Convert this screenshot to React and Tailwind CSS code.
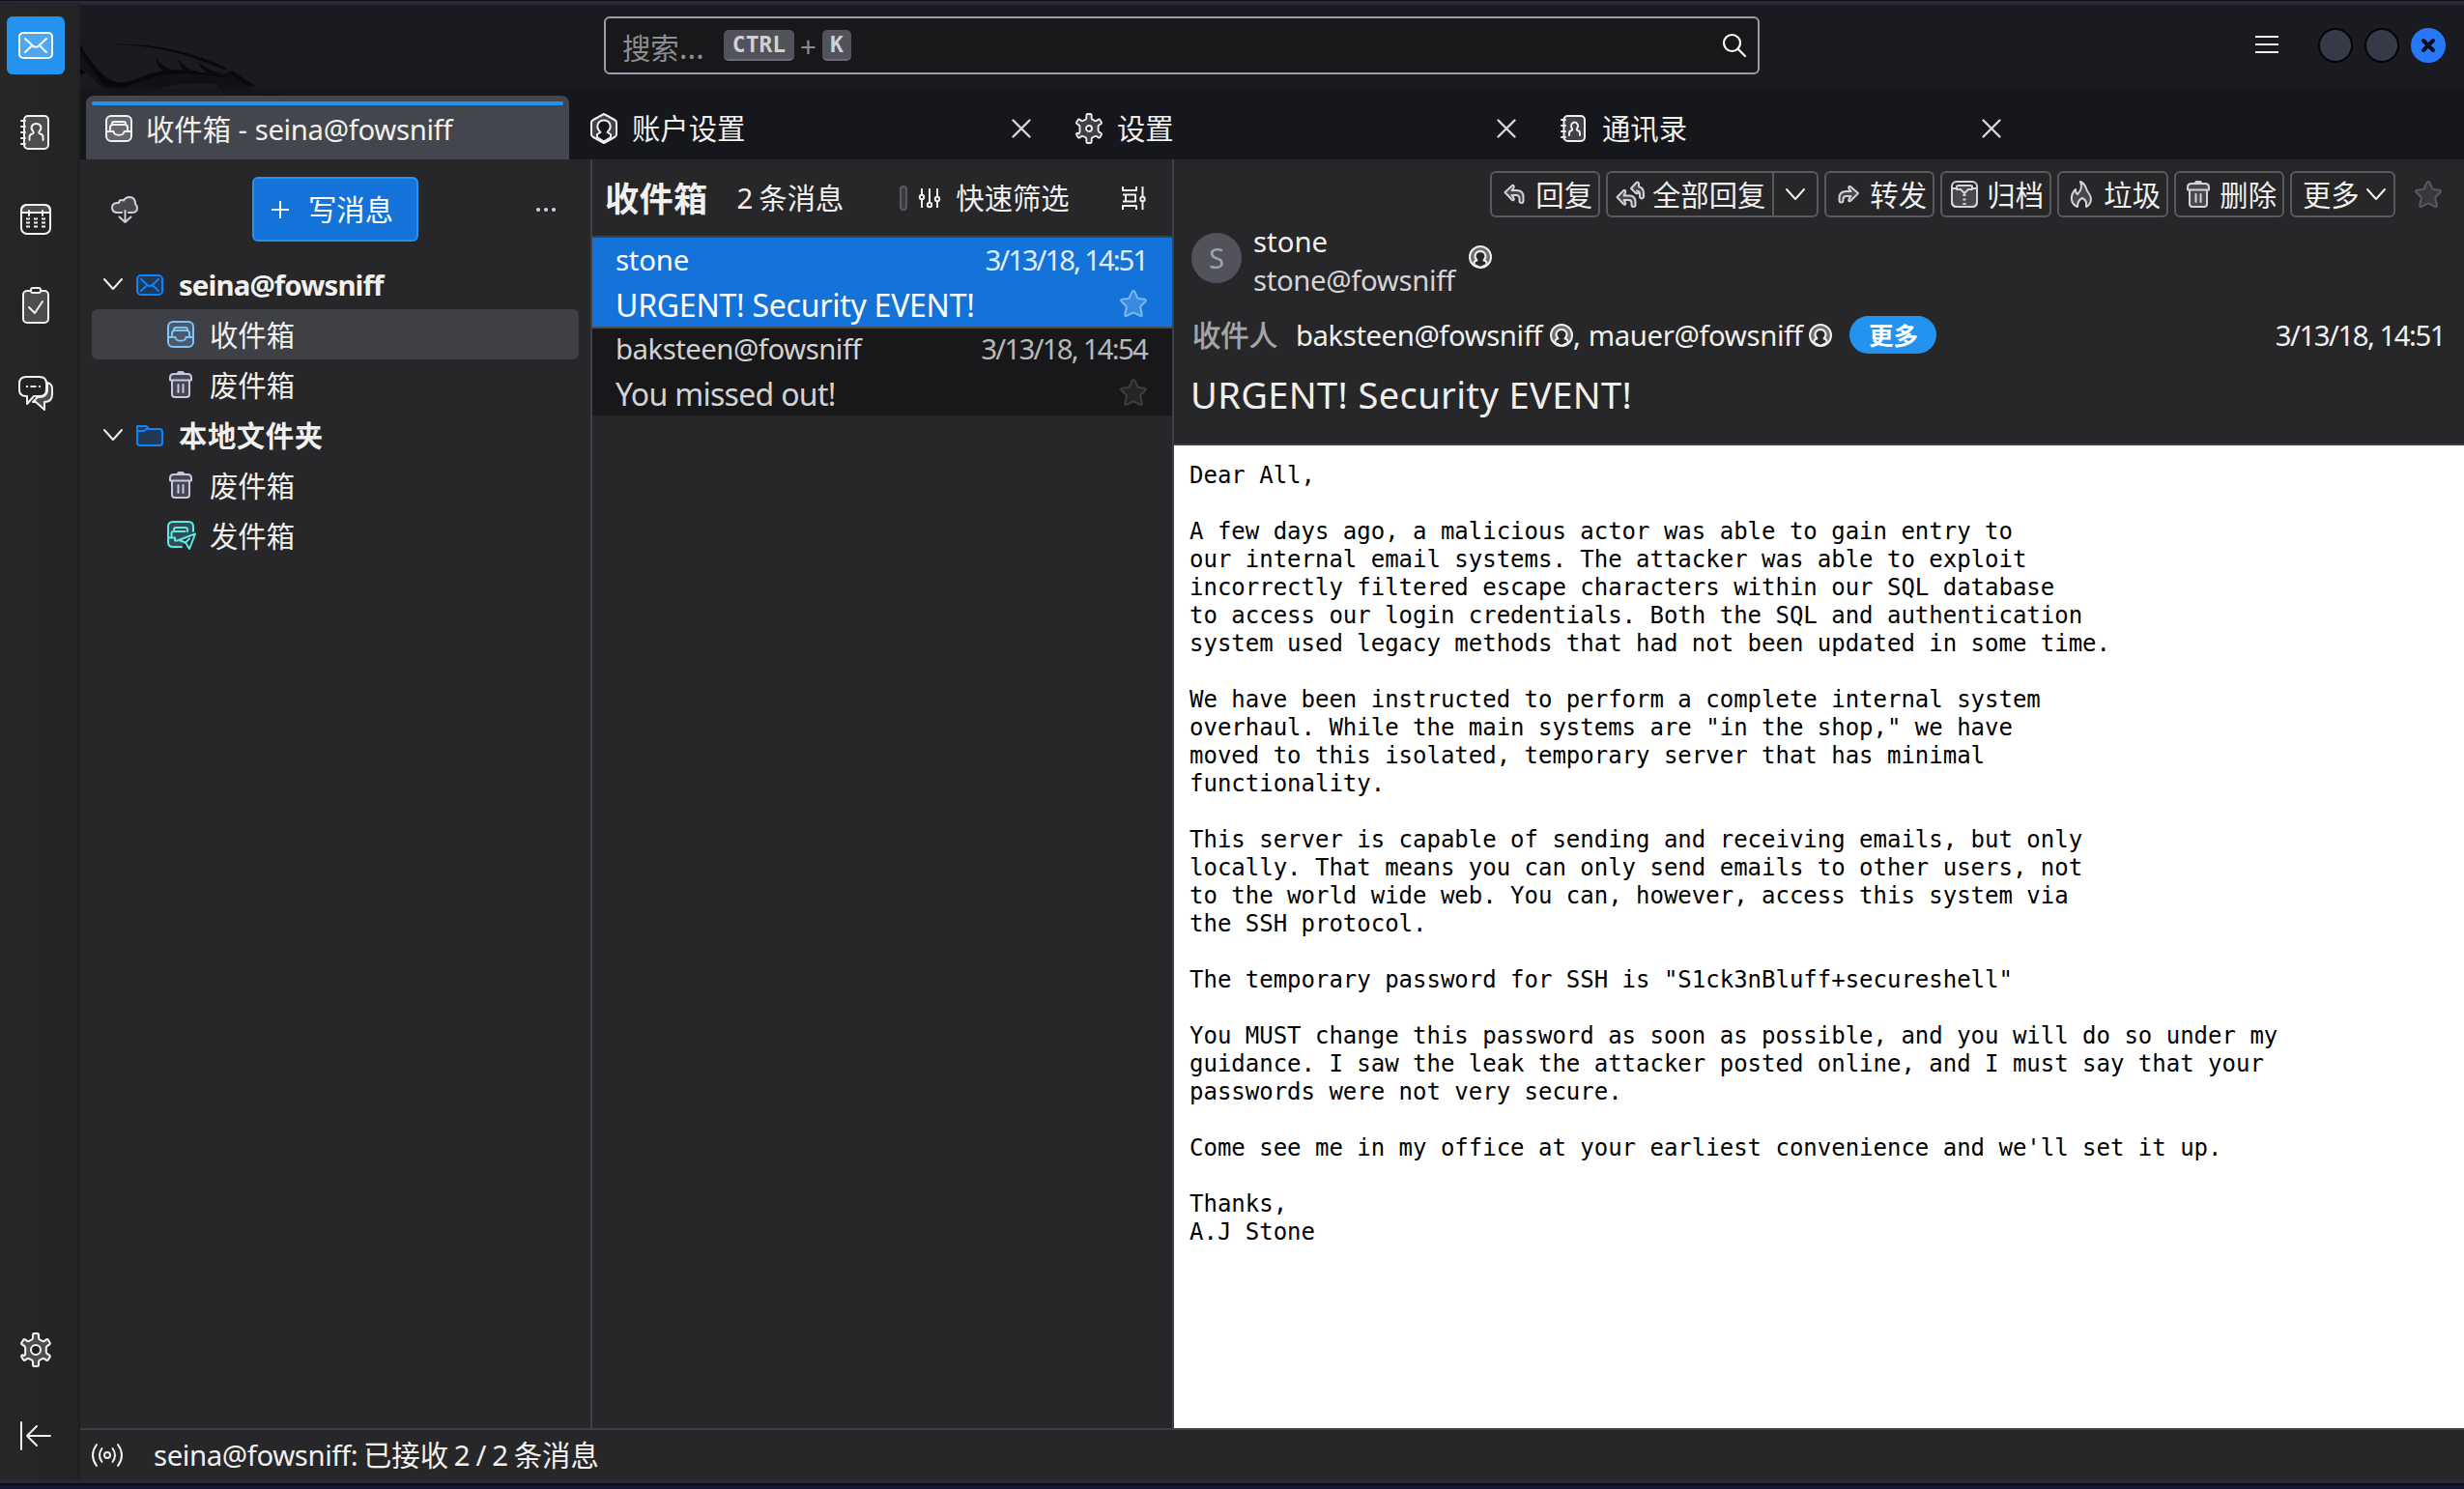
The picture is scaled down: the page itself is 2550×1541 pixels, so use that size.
import React from "react";

function Icon({ w = 28, h = 28, className = "", sw = 2, children }) {
  return (
    <svg
      width={w}
      height={h}
      viewBox={`0 0 ${w} ${h}`}
      fill="none"
      stroke="currentColor"
      strokeWidth={sw}
      strokeLinecap="round"
      strokeLinejoin="round"
      className={`block shrink-0 overflow-visible ${className}`}
    >
      {children}
    </svg>
  );
}

const soft = { fill: "currentColor", fillOpacity: 0.2 };

const MailIcon = ({ w = 36, h = 28, className }) => (
  <Icon w={w} h={h} className={className}>
    <rect x="1" y="1" width={w - 2} height={h - 2} rx="4" {...soft} />
    <path
      d={
        w > 30
          ? "M7 7l8 7.5q3 2.6 6 0L29 7M7 21l6.5-6.2M29 21l-6.5-6.2"
          : "M5 5l6.5 6q2.5 2.2 5 0L23 5M5 17l6-5.4M23 17l-6-5.4"
      }
    />
  </Icon>
);

const AddressIcon = ({ w = 30, h = 36, className }) => (
  <Icon w={w} h={h} className={className}>
    {h > 30 ? (
      <>
        <rect x="4" y="1" width="25" height="34" rx="4" {...soft} />
        <path d="M1 6h4M1 12h4M1 18h4M1 24h4M1 30h4" />
        <path d="M9.5 26v-3q0-3 3-3.5c1.5-.5 1.5-1.500.8-2.500C9.500 13 12.500 9 16.500 9s7 4 3.200 8c-.8 1-.7 2 .8 2.500q3 .5 3 3.500v3" />
      </>
    ) : (
      <>
        <rect x="3.500" y="1" width="21.500" height="26" rx="4" {...soft} />
        <path d="M1 5h4M1 11h4M1 17h4M1 23h4" />
        <path d="M9 21v-2q0-2.500 2.400-3c1-.4 1-1.200.5-2-2.400-3 0-6.500 2.600-6.500s5 3.500 2.600 6.500c-.5.8-.5 1.600.5 2q2.400.5 2.400 3v2" />
      </>
    )}
  </Icon>
);

const CalendarIcon = () => (
  <Icon w={32} h={32}>
    <rect x="1" y="1" width="30" height="30" rx="6" />
    <path d="M1 9V7q0-6 6-6h18q6 0 6 6v2z" {...soft} />
    <path d="M9 7v5M23 7v5" />
    <path strokeLinecap="butt" d="M6 15.500h4M14 15.500h4M22 15.500h4M6 19.500h4M14 19.500h4M22 19.500h4M6 23.500h4M14 23.500h4M22 23.500h4" />
  </Icon>
);

const TaskIcon = () => (
  <Icon w={28} h={38}>
    <rect x="1" y="4" width="26" height="33" rx="4" {...soft} />
    <rect x="9" y="1" width="10" height="5" rx="2" fill="#242424" />
    <path d="M7 21l6 6 8-12" />
  </Icon>
);

const ChatIcon = () => (
  <Icon w={36} h={36}>
    <path d="M30 7c4 1 5 3 5 6v6c0 5-3 8-8 8v8l-9-8h-3l5-5h2c5 0 8-3 8-7z" {...soft} />
    <path d="M8 1h14q7 0 7 7v6q0 7-7 7h-6l-7 8v-8H8q-7 0-7-7V8q0-7 7-7z" fill="#242424" />
    <path strokeLinecap="butt" d="M8 11h2M12.500 11h6M21 11h2" />
  </Icon>
);

const GearIcon = ({ big, className }) => (
  <svg
    width={big ? 34 : 30}
    height={big ? 36 : 32}
    viewBox="0 0 34 36"
    fill="none"
    stroke="currentColor"
    strokeWidth="2.100"
    strokeLinejoin="round"
    className={`block shrink-0 ${className || ""}`}
  >
    <path
      {...soft}
      d="M15.500 1h3q1.500 0 1.500 1.500v3q0 1.500 1.400 2.100l2 1.100q1.300.8 2.500.1l2-1.400q1.400-.8 2.100.5l1.500 2.600q.8 1.400-.5 2.200l-2.200 1.300q-1 .8-1 2v4q0 1.200 1 2l2.200 1.300q1.300.8.5 2.200l-1.500 2.600q-.7 1.300-2.100.5l-2-1.400q-1.200-.7-2.500.1l-2 1.100Q20 29 20 30.500v3q0 1.500-1.500 1.500h-3q-1.500 0-1.500-1.500v-3q0-1.500-1.400-2.100l-2-1.100q-1.300-.8-2.500-.1l-2 1.400q-1.400.8-2.100-.5l-1.500-2.600q-.8-1.400.5-2.200L5.200 24q1-.8 1-2v-6q0-1.200-1-2L3 12.700q-1.300-.8-.5-2.200L4 7.900q.7-1.300 2.100-.5l2 1.400q1.200.7 2.500-.1l2-1.100Q14 7 14 5.500v-3Q14 1 15.500 1z"
    />
    <circle cx="17" cy="18" r={big ? 5 : 3.4} fill="#1c1d20" />
  </svg>
);

const CollapseIcon = () => (
  <Icon w={32} h={30}>
    <path d="M1 1v28M31 15H7M17 5L7 15l10 10" />
  </Icon>
);

const InboxIcon = ({ className }) => (
  <Icon className={className}>
    <rect x="1" y="1" width="26" height="26" rx="5" {...soft} />
    <path d="M7 9q0-2 2-2h10q2 0 2 2" />
    <path d="M5 17v-4q0-3 3-3h12q3 0 3 3v4" fill="none" />
    <path d="M1 17h7.500c.5 5 10.500 5 11 0H27" />
  </Icon>
);

const TrashIcon = ({ w = 24, className }) => (
  <Icon w={w} h={28} className={className}>
    <path d="M3 10v14q0 3 3 3h12q3 0 3-3V10" {...soft} />
    <path d="M5 3h14q4 0 4 4v2.500H1V7q0-4 4-4z" {...soft} />
    <path d="M9 2.500Q9 1 10.500 1h3Q15 1 15 2.500z" />
    <path d="M9.500 14v8M14.500 14v8" />
  </Icon>
);

const FolderIcon = () => (
  <Icon w={28} h={22} className="text-[#0a84ff]">
    <path d="M1 5V1h9.500l2.500 3h11q3 0 3 3v11q0 3-3 3H4q-3 0-3-3z" {...soft} />
    <path d="M1 6h7.500l1.500-2h3" />
  </Icon>
);

const OutboxIcon = () => (
  <Icon w={30} h={30} className="ml-[2px] text-[#5fe8e4]">
    <path d="M15 27H6q-5 0-5-5V6q0-5 5-5h16q5 0 5 5v5" {...soft} />
    <path d="M7 10V9q0-2 2-2h10q2 0 2 2v2M4.500 16v-3q0-2 2-2h12M1 17.500h7v3h3" />
    <path d="M29 13.500l-6 15.500-4-6.500-7-2.500z" fill="#27272a" />
    <path d="M23 18.500L19 22.500" />
  </Icon>
);

const CloudIcon = () => (
  <Icon w={28} h={28} className="text-[#d0d0d4]">
    <path d="M11 17H6q-5-.5-5-5t5-5h2q0-3 3-3 1 0 2 .5Q15 1 19 1q6 0 6 7 2 2 2 4.500 0 4-5 4.500h-4" {...soft} />
    <path d="M14.500 15v12M8.500 21.500l6 5.500 6-5.500" />
  </Icon>
);

const Chevron = ({ className = "" }) => (
  <Icon w={20} h={12} className={className}>
    <path d="M1 1l9 10 9-10" />
  </Icon>
);

const CloseX = () => (
  <Icon w={20} h={20} sw={2.4} className="mt-[2px] text-[#d8d8d4]">
    <path d="M1.500 1.500l17 17M18.500 1.500l-17 17" />
  </Icon>
);

const AccountIcon = () => (
  <Icon w={28} h={32}>
    <path d="M14 1l11 6q2 1 2 3v12q0 2-2 3l-11 6-11-6q-2-1-2-3V10q0-2 2-3z" {...soft} />
    <path d="M7 25v-3l3.500-2c-6-6-2.500-12.500 3.500-12.500S23.500 14 17.500 20l3.500 2v3l-7 4.500z" fill="#15161a" />
  </Icon>
);

const PersonIcon = ({ className = "" }) => (
  <Icon w={24} h={24} className={className}>
    <circle cx="12" cy="12" r="11" fill="currentColor" fillOpacity="0.35" />
    <path d="M5.500 20v-2q0-2 3-2.500c-4-4-1.500-9.500 3.500-9.500s7.500 5.500 3.500 9.500q3 .5 3 2.500v2l-6.500 3z" fill="#27272a" />
  </Icon>
);

const SlidersIcon = () => (
  <Icon w={22} h={20}>
    <path strokeLinecap="butt" d="M3 0v6M3 12v8M11 0v15M19 0v8M19 14v6" />
    <circle cx="3" cy="9" r="2.200" />
    <circle cx="11" cy="17" r="2.200" />
    <circle cx="19" cy="11" r="2.200" />
  </Icon>
);

const DisplayIcon = () => (
  <Icon w={24} h={24}>
    <path d="M1 0v4h14V0M1 24v-4h14v4M3.500 8.500H14v7H3.500M3.500 8.500H1M3.500 15.500H1M4 8.500v7" strokeLinecap="butt" />
    <path d="M21.500 0v10M21.500 16v8" strokeLinecap="butt" />
    <circle cx="21.500" cy="13" r="2.200" />
  </Icon>
);

const StarIcon = ({ className }) => (
  <Icon className={className}>
    <path
      d="M14 1q1 0 1.500 1.200l2.700 6q.3.800 1.300.9l6 .6q1.500.2 1.500 1.200 0 .7-.8 1.400l-4.400 4.200q-.8.8-.6 1.800l1.600 7.200q.3 2-1.800 1.300l-5.800-2.900q-1.200-.6-2.400 0l-5.800 2.900q-2.100.7-1.800-1.300l1.600-7.200q.2-1-.6-1.800l-4.400-4.200Q1 11.600 1 10.900q0-1 1.500-1.200l6-.6q1-.1 1.300-.9l2.700-6Q13 1 14 1z"
      fill="currentColor"
      fillOpacity="0.35"
    />
  </Icon>
);

const ReplyIcon = () => (
  <Icon w={22} h={20} className="text-[#d4d4d8]">
    <path
      d="M8.500 1.500L1.500 8l7 7.500c1.500 1.500 3 .5 2-1.500l-2-3h4.500q3.500 0 3.500 3.500v2.500c0 2.500 4 2.500 4 0V13q0-7-7-7H8.500l2-2.500c1-2-.5-3.500-2-2z"
      {...soft}
    />
  </Icon>
);

const ReplyAllIcon = () => (
  <Icon w={30} h={28} className="text-[#d4d4d8]">
    <path
      d="M8 10.500L1.500 17l6.500 7c1.500 1.500 3 .5 2-1.500L8.500 20h5q3 0 3 3v2c0 2.500 4 2.500 4 0v-3q0-6.500-6.500-6.500H8.500L10 12.500c1-2-.5-3.500-2-2z"
      {...soft}
    />
    <path
      d="M16 8l5.500-6c1-1 2.500-.5 2.500 1v3q5 1.500 5 7v4q-2 3-4 0v-3q0-3-3-3.500M16 8l5 5q2 1 2.500-1"
      {...soft}
    />
  </Icon>
);

const ForwardIcon = () => (
  <Icon w={22} h={18} className="text-[#d4d4d8]">
    <path
      d="M13.500 1.500L21 8l-7.500 7.500c-1.500 1.500-3 .500-2-1.500l2-3H9q-3.500 0-3.500 3v1.500c0 2.500-4 2.500-4 0V13q0-7 7-7h5l-2-2.500c-1-2 .5-3.500 2-2z"
      {...soft}
    />
  </Icon>
);

const ArchiveIcon = () => (
  <Icon w={28} h={28} className="text-[#d4d4d8]">
    <rect x="1" y="1" width="26" height="26" rx="5" />
    <path d="M1 8h5V6q0-1 1.500-1h13Q22 5 22 6v2h5v14q0 5-5 5H6q-5 0-5-5z" {...soft} />
    <path d="M6 9h4l4 4 4-4h4" />
    <path d="M14 14v12" strokeDasharray="2 2.500" strokeWidth="3" strokeLinecap="butt" />
  </Icon>
);

const FlameIcon = () => (
  <Icon w={22} h={28} className="text-[#d4d4d8]">
    <path
      d="M10 1c7 3 5 8 8 11q4 5 2.500 10-1.500 4-4.500 5 1-7-4-9-5 2-5 9-5-2-6-7-1-6 4-11 0 4 2 5Q13 8 10 1z"
      {...soft}
    />
  </Icon>
);

function Kbd({ className, children }) {
  return (
    <div className={`flex h-[32px] shrink-0 items-center justify-center rounded-[5px] border-b-2 border-[#6a6a74] bg-[#52525b] font-['DejaVu_Sans_Mono',monospace] text-[23px] font-bold leading-none text-[#d0d0d2] ${className}`}>
      {children}
    </div>
  );
}

function Dragon() {
  return (
    <svg width="240" height="96" viewBox="83 3 240 96" className="absolute left-[83px] top-0">
      <path fill="#101115" d="M83 46Q100 75 115 83q14 6 30-2 26-11 46-8l38 5 11-5 24 16-8 3 5 3q15 4 27 2l-2 3H233l-9-13q-45-4-78 12h-31Q100 85 83 68z" />
      <path fill="#08090c" d="M118 46q60-2 118 25l-5 1Q176 47 118 46zM161 60q8 11 22 14l-12 1q-8-4-10-15zM184 61q8 12 24 14l-12 1q-10-4-12-15zM205 64q10 10 26 12l-10 2q-12-4-16-14zM83 46q16 28 32 38 12 4 28-3 26-11 50-8l38 5 11-4-12 6q-40-7-66-2l-36 12q-12 2-20-2Q98 78 83 53z" />
      <path fill="#08090c" d="M83 70v8l6-3zM240 73l24 16-9-1-17-12zM254 92q18 7 41 4l-3 3h-24q-8-2-14-7z" />
    </svg>
  );
}

function Tab({ icon, label }) {
  return (
    <div className="mr-[2px] flex h-[66px] w-[500px] items-center pl-[20px] pr-[24px]">
      <div className="mt-[2px] flex w-[43px] shrink-0 items-center">{icon}</div>
      <span className="flex-1 leading-none">{label}</span>
      <CloseX />
    </div>
  );
}

function TreeRow({ icon, label, selected }) {
  return (
    <div className={`mx-[12px] flex h-[52px] items-center rounded-[6px] pl-[78px] ${selected ? "bg-[#3f4046]" : ""}`}>
      <div className="flex w-[28px] shrink-0 justify-center">{icon}</div>
      <span className="ml-[16px]">{label}</span>
    </div>
  );
}

function RootRow({ icon, label, className = "" }) {
  return (
    <div className="flex h-[52px] items-center pl-[24px] font-bold">
      <Chevron />
      <div className="ml-[14px] mt-[2px]">{icon}</div>
      <span className={`ml-[16px] ${className}`}>{label}</span>
    </div>
  );
}

function ToolButton({ icon, label, className = "" }) {
  return (
    <div className={`flex h-[48px] items-center justify-end rounded-[6px] border-2 border-[#5a5a5e] pr-[6px] ${className}`}>
      <div className="flex flex-1 items-center justify-center">{icon}</div>
      <span>{label}</span>
    </div>
  );
}

const BODY = `Dear All,

A few days ago, a malicious actor was able to gain entry to
our internal email systems. The attacker was able to exploit
incorrectly filtered escape characters within our SQL database
to access our login credentials. Both the SQL and authentication
system used legacy methods that had not been updated in some time.

We have been instructed to perform a complete internal system
overhaul. While the main systems are "in the shop," we have
moved to this isolated, temporary server that has minimal
functionality.

This server is capable of sending and receiving emails, but only
locally. That means you can only send emails to other users, not
to the world wide web. You can, however, access this system via
the SSH protocol.

The temporary password for SSH is "S1ck3nBluff+secureshell"

You MUST change this password as soon as possible, and you will do so under my
guidance. I saw the leak the attacker posted online, and I must say that your
passwords were not very secure.

Come see me in my office at your earliest convenience and we'll set it up.

Thanks,
A.J Stone`;

function Spaces() {
  return (
    <div className="flex w-[83px] shrink-0 flex-col bg-[linear-gradient(to_right,#262626,#242424_94%,#1f1f20)] pl-[7px] pt-[14px]">
      <div className="flex size-[60px] items-center justify-center rounded-[6px] bg-[#2492ef] text-white">
        <MailIcon />
      </div>
      <div className="mt-[42px] flex h-[36px] w-[60px] justify-center pr-[2px]"><AddressIcon /></div>
      <div className="mt-[56px] flex h-[32px] w-[60px] justify-center"><CalendarIcon /></div>
      <div className="mt-[54px] flex h-[38px] w-[60px] justify-center"><TaskIcon /></div>
      <div className="mt-[54px] flex h-[36px] w-[60px] justify-center"><ChatIcon /></div>
      <div className="mt-auto flex h-[36px] w-[60px] justify-center"><GearIcon big /></div>
      <div className="mb-[30px] mt-[56px] flex h-[30px] w-[60px] justify-center"><CollapseIcon /></div>
    </div>
  );
}

function FolderPane() {
  return (
    <div className="flex w-[530px] shrink-0 flex-col border-r-2 border-[#3f3f46]">
      <div className="flex h-[103px] items-center pl-[32px] pr-[36px]">
        <CloudIcon />
        <div className="ml-[118px] flex h-[67px] w-[172px] items-center rounded-[6px] border-2 border-[#2492ef] bg-[#1373d9] pl-[18px] text-white">
          <Icon w={18} h={18}><path d="M9 0v18M0 9h18" strokeLinecap="butt" /></Icon>
          <span className="ml-[20px]">写消息</span>
        </div>
        <div className="ml-auto flex gap-[4px]">
          <i className="size-[4px] rounded-full bg-[#d4d4d8]" />
          <i className="size-[4px] rounded-full bg-[#d4d4d8]" />
          <i className="size-[4px] rounded-full bg-[#d4d4d8]" />
        </div>
      </div>
      <RootRow className="tracking-[-0.85px]" icon={<MailIcon w={28} h={22} className="text-[#0a84ff]" />} label="seina@fowsniff" />
      <TreeRow selected icon={<InboxIcon className="text-[#7cc4fa]" />} label="收件箱" />
      <TreeRow icon={<TrashIcon className="text-[#c8c8e4]" />} label="废件箱" />
      <RootRow className="tracking-[0.6px]" icon={<FolderIcon />} label="本地文件夹" />
      <TreeRow icon={<TrashIcon className="text-[#c8c8e4]" />} label="废件箱" />
      <TreeRow icon={<OutboxIcon />} label="发件箱" />
    </div>
  );
}

function ThreadPane() {
  return (
    <div className="flex w-[602px] shrink-0 flex-col border-r-2 border-[#3f3f46]">
      <div className="flex h-[81px] items-center border-b-2 border-[#3f3f46] pl-[13px] pr-[28px]">
        <span className="text-[35.200px] font-bold tracking-[0.3px]">收件箱</span>
        <span className="ml-[30px] [word-spacing:-1.5px]">2 条消息</span>
        <i className="ml-[58px] h-[26px] w-[8px] rounded-[4px] border-2 border-[#5a5a5e] bg-[#3a3a3d]" />
        <div className="ml-[12px]"><SlidersIcon /></div>
        <span className="ml-[16px]">快速筛选</span>
        <div className="ml-auto"><DisplayIcon /></div>
      </div>
      <div className="h-[94px] border-b-2 border-[#4b4b50] bg-[#1373d9] pl-[24px] pr-[26px] text-white">
        <div className="flex h-[44px] items-center justify-between">
          <span className="tracking-[-0.2px]">stone</span>
          <span className="tracking-[-2.050px] text-[#e0ecfa]">3/13/18, 14:51</span>
        </div>
        <div className="flex h-[48px] items-center justify-between text-[32px] tracking-[-0.25px]">
          <span>URGENT! Security EVENT!</span>
          <StarIcon className="text-[#7eb6f2]" />
        </div>
      </div>
      <div className="h-[90px] bg-[#18181a] pl-[24px] pr-[26px] text-[#d2d2d4]">
        <div className="flex h-[40px] items-center justify-between">
          <span className="tracking-[-0.5px]">baksteen@fowsniff</span>
          <span className="tracking-[-1.750px] text-[#b8b8ba]">3/13/18, 14:54</span>
        </div>
        <div className="flex h-[52px] items-center justify-between text-[32px] tracking-[-0.7px]">
          <span>You missed out!</span>
          <StarIcon className="text-[#3f3f42]" />
        </div>
      </div>
    </div>
  );
}

function MessagePane() {
  return (
    <div className="flex min-w-0 flex-1 flex-col">
      <div className="border-b-2 border-[#3f3f46]">
        <div className="flex justify-end gap-[6px] pr-[23px] pt-[12px]">
          <ToolButton className="w-[114px]" icon={<ReplyIcon />} label="回复" />
          <div className="flex h-[48px] w-[220px] items-center rounded-[6px] border-2 border-[#5a5a5e]">
            <div className="flex w-[46px] justify-center"><ReplyAllIcon /></div>
            <span className="w-[124px]">全部回复</span>
            <div className="flex h-full flex-1 items-center justify-center border-l-2 border-[#5a5a5e]"><Chevron /></div>
          </div>
          <ToolButton className="w-[114px]" icon={<ForwardIcon />} label="转发" />
          <ToolButton className="w-[115px]" icon={<ArchiveIcon />} label="归档" />
          <ToolButton className="w-[115px]" icon={<FlameIcon />} label="垃圾" />
          <ToolButton className="w-[114px]" icon={<TrashIcon className="text-[#d4d4d8]" />} label="删除" />
          <div className="flex h-[48px] w-[109px] items-center gap-[7px] rounded-[6px] border-2 border-[#5a5a5e] pl-[11px]">
            <span>更多</span>
            <Chevron />
          </div>
          <StarIcon className="ml-[14px] mt-[10px] text-[#5a5a5e]" />
        </div>
        <div className="mt-[4px] flex h-[80px] items-center pl-[18px]">
          <div className="mb-[4px] flex size-[52px] items-center justify-center rounded-full bg-[#52525b] pt-[2px] text-[#a1a1aa]">S</div>
          <div className="ml-[12px] flex flex-col leading-[37px]">
            <span>stone</span>
            <span className="tracking-[-0.35px] text-[#d4d4d8]">stone@fowsniff</span>
          </div>
          <PersonIcon className="mb-[6px] ml-[14px]" />
        </div>
        <div className="mt-[18px] flex h-[39px] items-center pl-[19px] pr-[20px]">
          <span className="text-[#a6a6a8] [-webkit-text-stroke:0.7px_#a6a6a8]">收件人</span>
          <span className="ml-[19px] tracking-[-0.45px]">baksteen@fowsniff</span>
          <PersonIcon className="ml-[8px]" />
          <span>,</span>
          <span className="ml-[8px] tracking-[-0.4px]">mauer@fowsniff</span>
          <PersonIcon className="ml-[7px]" />
          <span className="ml-[18px] flex h-[39px] w-[90px] items-center justify-center rounded-full bg-[#2492ef] text-[25.500px] font-bold text-white">更多</span>
          <span className="ml-auto tracking-[-1.5px]">3/13/18, 14:51</span>
        </div>
        <div className="mb-[9px] pl-[17px] text-[38.100px] leading-[84px] tracking-[0.35px]">URGENT! Security EVENT!</div>
      </div>
      <pre className="m-0 flex-1 bg-white px-[16px] pt-[17px] font-['DejaVu_Sans_Mono',monospace] text-[24px] leading-[29px] tracking-[-0.01px] text-black">{BODY}</pre>
    </div>
  );
}

export default function App() {
  return (
    <div className="flex h-[1541px] w-[2550px] flex-col overflow-hidden whitespace-nowrap bg-[#27272a] font-['Noto_Sans','Noto_Sans_CJK_SC',sans-serif] text-[29.330px] leading-none text-[#f0f0ee] [&_span]:pt-[3px]">
      <div className="h-[3px] shrink-0 border-t border-[#101018] bg-[#2a2a37]" />
      <div className="relative flex min-h-0 flex-1">
        <Dragon />
        <Spaces />
        <div className="flex min-w-0 flex-1 flex-col">
          <div className="flex h-[88px] shrink-0 items-start border-t-2 border-[#2a2a37] bg-[#1a1b20] pl-[542px] pr-[19px] pt-[12px]">
            <div className="flex h-[60px] w-[1196px] items-center rounded-[6px] border-2 border-[#9c9ca8] bg-[#18181a] pl-[17px] pr-[12px] text-[#8e8e90]">
              <span className="w-[105px]">搜索<span className="text-[33px]">…</span></span>
              <Kbd className="w-[73px]">CTRL</Kbd>
              <span className="w-[29px] text-center">+</span>
              <Kbd className="w-[30px]">K</Kbd>
              <Icon w={24} h={24} sw={2.2} className="ml-auto text-white">
                <circle cx="9.500" cy="9.500" r="8.500" />
                <path d="M15.500 15.500l7.500 7.500" />
              </Icon>
            </div>
            <div className="ml-auto flex h-[60px] items-center">
              <div className="mb-[3px] mr-[41px] flex h-[18px] w-[24px] flex-col justify-between">
                <i className="h-[2px] bg-[#f0f0ee]" />
                <i className="h-[2px] bg-[#f0f0ee]" />
                <i className="h-[2px] bg-[#f0f0ee]" />
              </div>
              <i className="mr-[12px] size-[36px] rounded-full border-2 border-[#050507] bg-[#353a47]" />
              <i className="mr-[12px] size-[36px] rounded-full border-2 border-[#050507] bg-[#353a47]" />
              <div className="flex size-[36px] items-center justify-center rounded-full bg-[#2777fb] text-[#0b0d14]">
                <Icon w={14} h={14} sw={4}><path d="M2 2l10 10M12 2L2 12" /></Icon>
              </div>
            </div>
          </div>
          <div className="z-10 flex h-[74px] shrink-0 items-end bg-[#15161b]/95 pl-[6px]">
            <div className="mr-[2px] flex h-[66px] w-[500px] flex-col rounded-t-[8px] bg-[#44464d] px-[6px] pt-[6px]">
              <i className="h-[4px] rounded-full bg-[#2492ef]" />
              <div className="flex flex-1 items-center pb-[8px] pl-[14px]">
                <InboxIcon />
                <span className="ml-[14px]">收件箱 - <span className="tracking-[-0.35px]">seina@fowsniff</span></span>
              </div>
            </div>
            <Tab icon={<AccountIcon />} label="账户设置" />
            <Tab icon={<GearIcon className="-ml-[1px]" />} label="设置" />
            <Tab icon={<AddressIcon w={26} h={28} />} label="通讯录" />
          </div>
          <div className="flex min-h-0 flex-1">
            <FolderPane />
            <ThreadPane />
            <MessagePane />
          </div>
          <div className="flex h-[53px] shrink-0 items-center border-t-2 border-[#3f3f46] bg-[#27272a] pl-[12px]">
            <Icon w={32} h={24}>
              <circle cx="16" cy="12" r="3" />
              <path d="M10.500 5q-5 7 0 14M21.500 5q5 7 0 14M5 1q-8 11 0 22M27 1q8 11 0 22" />
            </Icon>
            <span className="ml-[32px] [word-spacing:-1.8px]"><span className="tracking-[-0.4px]">seina@fowsniff:</span> 已接收 2 / 2 条消息</span>
          </div>
        </div>
      </div>
      <div className="h-[4px] shrink-0 bg-[#2a2a37]" />
      <div className="h-[6px] shrink-0 border-t-2 border-[#0c0c14] bg-[#15173a]" />
    </div>
  );
}
